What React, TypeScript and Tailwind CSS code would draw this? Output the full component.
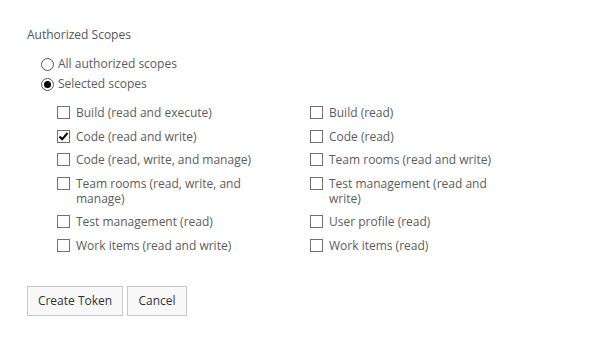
import React from 'react';

type Scope = { label: string; checked?: boolean };

const left: Scope[] = [
  { label: 'Build (read and execute)' },
  { label: 'Code (read and write)', checked: true },
  { label: 'Code (read, write, and manage)' },
  { label: 'Team rooms (read, write, and manage)' },
  { label: 'Test management (read)' },
  { label: 'Work items (read and write)' },
];

const right: Scope[] = [
  { label: 'Build (read)' },
  { label: 'Code (read)' },
  { label: 'Team rooms (read and write)' },
  { label: 'Test management (read and write)' },
  { label: 'User profile (read)' },
  { label: 'Work items (read)' },
];

function Checkbox({ checked }: { checked?: boolean }) {
  return (
    <span className="mt-[1px] flex h-[13px] w-[13px] shrink-0 items-center justify-center border border-[#707070] bg-white">
      {checked && (
        <svg width="11" height="11" viewBox="0 0 11 11">
          <path d="M1.5 5.5 L4.2 8.3 L9.5 2" fill="none" stroke="#000" strokeWidth="2" />
        </svg>
      )}
    </span>
  );
}

function Radio({ checked, label }: { checked?: boolean; label: string }) {
  return (
    <div className="flex items-center gap-[4px] leading-[20px]">
      <span className="flex h-[13px] w-[13px] items-center justify-center rounded-full border border-[#555] bg-white">
        {checked && <span className="h-[7px] w-[7px] rounded-full bg-black" />}
      </span>
      <span>{label}</span>
    </div>
  );
}

function ScopeRow({ scope, width }: { scope: Scope; width: string }) {
  return (
    <div className="flex items-start gap-[6px]">
      <Checkbox checked={scope.checked} />
      <span className={`${width} leading-[15px]`}>{scope.label}</span>
    </div>
  );
}

export default function App() {
  return (
    <div
      className="h-[350px] w-[600px] bg-white pl-[27px] pt-[27px] text-[12px] text-[#5c5c5c]"
      style={{ fontFamily: '"Open Sans", "Noto Sans", sans-serif' }}
    >
      <div className="leading-[16px] text-[#555]">Authorized Scopes</div>

      <div className="ml-[14px] mt-[11px]">
        <Radio label="All authorized scopes" />
        <Radio label="Selected scopes" checked />
      </div>

      <div className="ml-[30px] mt-[11px] grid w-[450px] grid-cols-[253px_1fr] gap-y-[8.5px]">
        {left.map((s, i) => (
          <React.Fragment key={i}>
            <ScopeRow scope={s} width="max-w-[200px]" />
            <ScopeRow scope={right[i]} width="max-w-[170px]" />
          </React.Fragment>
        ))}
      </div>

      <div className="mt-[33px] flex gap-[4px]">
        <button className="h-[30px] w-[96px] border border-[#c8c8c8] bg-[#f8f8f8] text-[12px] text-[#333]">
          Create Token
        </button>
        <button className="h-[30px] w-[60px] border border-[#c8c8c8] bg-[#f8f8f8] text-[12px] text-[#333]">
          Cancel
        </button>
      </div>
    </div>
  );
}
